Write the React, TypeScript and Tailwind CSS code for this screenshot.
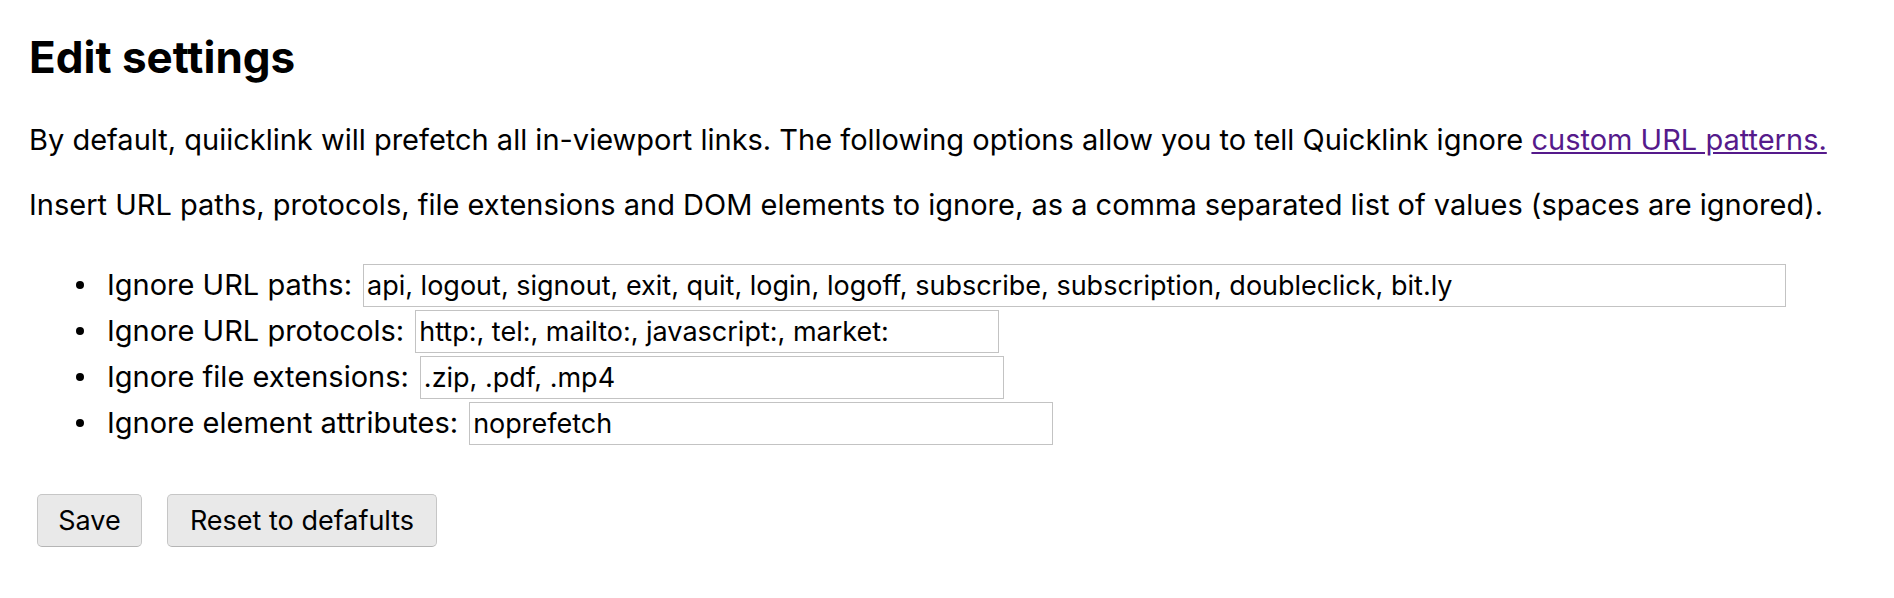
import { useState } from 'react'

const FIELDS = [
  { label: 'Ignore URL paths:', value: 'api, logout, signout, exit, quit, login, logoff, subscribe, subscription, doubleclick, bit.ly', width: 'w-[1423px]' },
  { label: 'Ignore URL protocols:', value: 'http:, tel:, mailto:, javascript:, market:', width: 'w-[584px]' },
  { label: 'Ignore file extensions:', value: '.zip, .pdf, .mp4', width: 'w-[584px]' },
  { label: 'Ignore element attributes:', value: 'noprefetch', width: 'w-[584px]' },
]

export default function App() {
  const [values, setValues] = useState(FIELDS.map(f => f.value))

  return (
    <div className="min-h-[598px] bg-white px-[29px] pt-[31px] text-black font-['Inter',sans-serif]">
      <h1 className="text-[44px] leading-[52px] font-bold">Edit settings</h1>

      <p className="mt-[39px] text-[29px] leading-[35px]">
        By default, quiicklink will prefetch all in-viewport links. The following options allow you to tell Quicklink ignore{' '}
        <a href="#" className="text-[#551a8b] underline">custom URL patterns.</a>
      </p>
      <p className="mt-[30px] text-[29px] leading-[35px]">
        Insert URL paths, protocols, file extensions and DOM elements to ignore, as a comma separated list of values (spaces are ignored).
      </p>

      <ul className="mt-[40px] text-[29px]">
        {FIELDS.map((f, i) => (
          <li key={f.label} className="flex h-[46px] items-center">
            <span className="ml-[47px] mr-[23px] h-[8px] w-[8px] shrink-0 rounded-full bg-black" />
            <label className="whitespace-nowrap">{f.label}</label>
            <input
              className={`ml-[11px] h-[43px] ${f.width} border border-[#c3c3c3] bg-white px-[3px] text-[27px] outline-none`}
              value={values[i]}
              onChange={e => setValues(v => v.map((x, j) => (j === i ? e.target.value : x)))}
            />
          </li>
        ))}
      </ul>

      <div className="mt-[48px] ml-[8px] flex gap-[25px]">
        <button className="h-[53px] w-[105px] rounded-[5px] border border-[#c6c6c6] border-b-[#b5b5b5] bg-[#e9e9e9] pt-[2px] text-[27px]">
          Save
        </button>
        <button className="h-[53px] w-[270px] rounded-[5px] border border-[#c6c6c6] border-b-[#b5b5b5] bg-[#e9e9e9] pt-[2px] text-[27px]">
          Reset to defafults
        </button>
      </div>
    </div>
  )
}
